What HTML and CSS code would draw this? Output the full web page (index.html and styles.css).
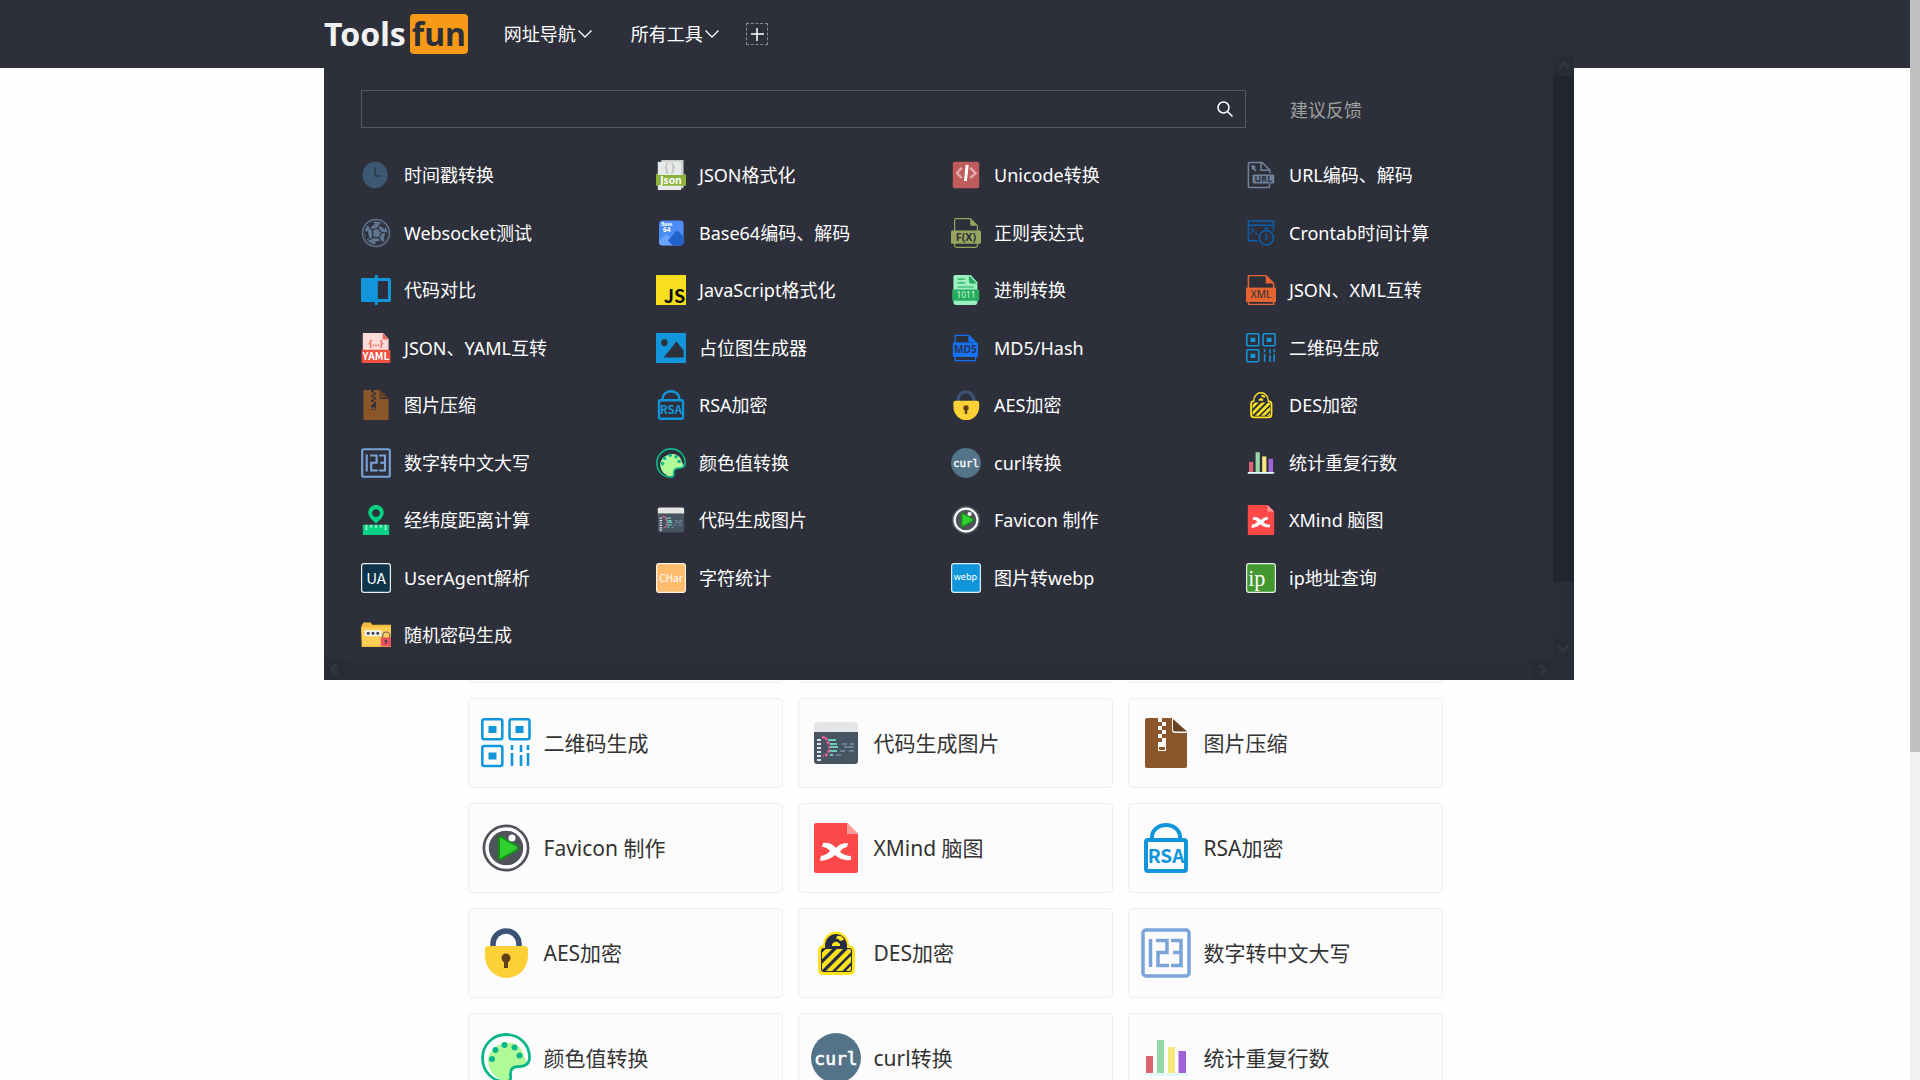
FILE: index.html
```html
<!DOCTYPE html>
<html lang="zh-CN">
<head>
<meta charset="utf-8">
<title>Tools fun</title>
<link rel="stylesheet" href="styles.css">
</head>
<body>
<svg class="clips" aria-hidden="true">
  <clipPath id="ball-clip"><circle cx="25" cy="25" r="19"/></clipPath>
  <clipPath id="des-clip"><rect x="11" y="21" width="29" height="22" rx="2"/></clipPath>
  <clipPath id="base-clip"><rect x="5" y="4" width="41" height="42" rx="6"/></clipPath>
</svg>
<svg class="sprite" aria-hidden="true">
  <symbol id="i-time" viewBox="0 0 50 50"><ellipse cx="23.5" cy="25" rx="21" ry="22" fill="#3c5873"/><path d="M23.5 12v14.5H35" fill="none" stroke="#2b3a4d" stroke-width="2.5"/></symbol>
  <symbol id="i-websocket" viewBox="0 0 50 50"><circle cx="25" cy="25" r="22.5" fill="none" stroke="#5f748d" stroke-width="2.5"/><circle cx="25" cy="25" r="19" fill="#5f748d"/><g clip-path="url(#ball-clip)" fill="none" stroke="#2d303a" stroke-width="2"><path d="M19 20l9-3 6 7-4 9-10-1zM19 20l-5-5M28 17l4-6M34 24l9 1M30 33l4 8M20 32l-7 5"/></g><g clip-path="url(#ball-clip)" fill="#2d303a"><path d="M11 12l8-6 4 4-8 6zM32 8l9 5-1 6-9-7zM44 24l-1 13-5-1 2-10zM24 39l11-1 1 6-12 2zM6 22l5 0 3 12-5 2z"/></g></symbol>
  <symbol id="i-diff" viewBox="0 0 50 50"><path d="M2 5h21V2a2 2 0 0 1 5 0v3h19a3 3 0 0 1 3 3v34a3 3 0 0 1-3 3H28v3a2 2 0 0 1-5 0v-3H2a2 2 0 0 1-2-2V7a2 2 0 0 1 2-2zm26 5v30h17V10z" fill="#1296db" fill-rule="evenodd"/></symbol>
  <symbol id="i-yaml" viewBox="0 0 50 50"><path d="M3 0h34l9 10v20H3z" fill="#fddbd9"/><path d="M36 0l10 11H36z" fill="#f2675a"/><rect x="1" y="28" width="48" height="22" rx="2" fill="#f0503f"/><text x="25" y="22" font-size="15" font-weight="700" fill="#ee5a4a">{...}</text><text x="25" y="45" font-size="17" class="narrow" font-weight="700" fill="#fff">YAML</text></symbol>
  <symbol id="i-zip" viewBox="0 0 50 50"><path d="M6 0h11v4h4v4h-4v4h4v4h-4v4h4v4h-4v9h8V20h-4v-4h4v-4h-4V8h4V4h-4V0h10v12q0 3 3 3h12v33a2 2 0 0 1-2 2H6a2 2 0 0 1-2-2V2a2 2 0 0 1 2-2z" fill="#8b572a"/><rect x="18" y="29" width="6" height="3" fill="#8b572a"/><path d="M32 1l14 12.500H34q-2 0-2-2z" fill="#6b4220"/></symbol>
  <symbol id="i-json" viewBox="0 0 50 50"><path d="M9 0h37v47H9z" fill="#c9ccce"/><path d="M3 3h39v47H3z" fill="#e8e9e9"/><path d="M0 24l3-3v4h44v-3l3 3v18H0z" fill="#8cb43d"/><text x="23" y="19" font-size="17" fill="#a9acae">{ }</text><text x="25" y="40" font-size="17" font-weight="700" fill="#fff">Json</text></symbol>
  <symbol id="i-base64" viewBox="0 0 50 50"><rect x="5" y="4" width="41" height="42" rx="6" fill="#4d8df6"/><g clip-path="url(#base-clip)"><path d="M5 37l8-7q5-3 9 1l14 15H5z" fill="#6ba4ff"/><path d="M20 38l11-14q4-4 7-1l8 8v15H28z" fill="#2262cc"/></g><text x="18" y="13" font-size="8" font-weight="700" fill="#fff">Base</text><text x="18" y="24" font-size="11" font-weight="700" fill="#fff">64</text></symbol>
  <symbol id="i-js" viewBox="0 0 50 50"><path d="M0 0h50v50H0z" fill="#f7df1e"/><text x="31" y="46" font-size="30" class="narrow" font-weight="700" fill="#080808">JS</text></symbol>
  <symbol id="i-image" viewBox="0 0 50 50"><path d="M0 0h50v50H0zM14 10a5.500 6 0 1 0 .1 0zM34 14L13 41h33V29z" fill="#1296db" fill-rule="evenodd"/></symbol>
  <symbol id="i-rsa" viewBox="0 0 50 50"><rect x="5" y="17" width="40" height="31" rx="2" fill="none" stroke="#1296db" stroke-width="4"/><path d="M11 16v-2a14 12 0 0 1 28 0v2" fill="none" stroke="#1296db" stroke-width="4"/><text x="25" y="40" font-size="19" class="narrow" font-weight="700" fill="#1296db">RSA</text></symbol>
  <symbol id="i-unicode" viewBox="0 0 50 50"><rect x="3" y="3" width="44" height="44" rx="3" fill="#bf5b5b"/><path d="M18 13L10 22l8 8M32 13l9 9-9 8" fill="none" stroke="#e3a8a8" stroke-width="4"/><path d="M27 8l-3 27" stroke="#fff" stroke-width="5"/></symbol>
  <symbol id="i-regex" viewBox="0 0 50 50"><path d="M6 22V4q0-3 3-3h23l12 12v9M6 40v6q0 3 3 3h32q3 0 3-3v-6" fill="none" stroke="#97a45e" stroke-width="2"/><path d="M32 1l12 12h-9q-3 0-3-3z" fill="#97a45e"/><rect y="21" width="50" height="22" rx="2" fill="#97a45e"/><text x="25" y="38" font-size="18" font-weight="700" fill="#2d303a">F(X)</text></symbol>
  <symbol id="i-binary" viewBox="0 0 50 50"><path d="M7 0h26l11 12v34q0 4-4 4H8q-4 0-4-4V3q0-3 3-3z" fill="#9cefc0"/><path d="M30 1l13 13H33q-3 0-3-3z" fill="#27ab5f"/><path d="M11 7h12M11 13h12M11 20h27" stroke="#27ab5f" stroke-width="2"/><rect x="2" y="24" width="45" height="19" rx="2" fill="#27ab5f"/><text x="25" y="39" font-size="14" fill="#c8f8dc">1011</text></symbol>
  <symbol id="i-md5" viewBox="0 0 50 50"><path d="M7 18V4h23l10 10v4M7 40v6h34v-6" fill="none" stroke="#1672f5" stroke-width="2"/><path d="M29 4v11h12z" fill="#1672f5"/><rect x="3" y="16" width="42" height="24" rx="2" fill="#1672f5"/><text x="24" y="34" font-size="17" font-weight="700" fill="#263554">MD5</text></symbol>
  <symbol id="i-aes" viewBox="0 0 50 50"><path d="M12 19v-3a13 13 0 0 1 26 0v3" fill="none" stroke="#3c5275" stroke-width="5.500"/><path d="M7 18h36q4 0 4 4v6a21.500 22 0 0 1-43 0v-6q0-4 3-4z" fill="#fdd135"/><circle cx="25" cy="30" r="4.500" fill="#5e4019"/><path d="M23 31h4v9h-4z" fill="#5e4019"/></symbol>
  <symbol id="i-url" viewBox="0 0 50 50"><path d="M40 22V17L27 4H6q-2 0-2 2v38q0 2 2 2h33v-6" fill="none" stroke="#71829a" stroke-width="2.500"/><path d="M25 4v13h15" fill="none" stroke="#71829a" stroke-width="2.500"/><path d="M9 8l8 3-3 2 4 5-2 1-4-4-2 2z" fill="#71829a"/><rect x="11" y="24" width="36" height="15" rx="2" fill="#71829a"/><text x="29" y="37" font-size="15" font-weight="700" fill="#2d303a">URL</text></symbol>
  <symbol id="i-cron" viewBox="0 0 50 50"><path d="M19 38H4V5h42v14M4 12h42" fill="none" stroke="#0a60b0" stroke-width="2.500"/><path d="M8 17l5 4-5 4M15 26h5M34 20v-3m-4 0h8M43 23l2-2" fill="none" stroke="#0a60b0" stroke-width="2"/><circle cx="34" cy="33" r="12" fill="none" stroke="#0a60b0" stroke-width="2.500"/><path d="M34 26v9M32 35h4" stroke="#0a60b0" stroke-width="2"/></symbol>
  <symbol id="i-xml" viewBox="0 0 50 50"><path d="M4 22V1h29l13 13v8M4 44v5h42v-5" fill="none" stroke="#e5642f" stroke-width="2.500"/><path d="M33 1v13h13z" fill="#e5642f"/><rect y="21" width="50" height="24" fill="#e5642f"/><text x="25" y="39" font-size="17" fill="#2d303a">XML</text></symbol>
  <symbol id="i-qr" viewBox="0 0 50 50"><g fill="none" stroke="#1296db" stroke-width="2.600"><rect x="1.300" y="1.300" width="20" height="20" rx="2"/><rect x="28.500" y="1.300" width="20" height="20" rx="2"/><rect x="1.300" y="28" width="20" height="20" rx="2"/><path d="M31 27v5M31 35v13M40 27v7M40 37v11M47 27v5M47 35v13"/></g><path d="M7.500 8h8v7h-8zM34.500 8h8v7h-8zM7.500 34.500h8v7h-8z" fill="#1296db"/></symbol>
  <symbol id="i-des" viewBox="0 0 50 50"><path d="M12 17a13 13.500 0 0 1 26 0q6 1 6 6v18q0 6-6 6H13q-6 0-6-6V23q0-5 5-6z" fill="#fce21b"/><path d="M14 21v-3a11 12 0 0 1 22 0v3z" fill="#252c44"/><path d="M21 18v-2q4-5 8 0v2zM26 8q5-1 7 4l-4 1q-2-3-4-2z" fill="#fce21b"/><rect x="10" y="20" width="31" height="24" rx="3" fill="#252c44"/><g clip-path="url(#des-clip)" stroke="#fce21b" stroke-width="4.500"><path d="M6 33l19-19M6 44l26-26M13 48l30-30M23 48l20-20M33 48l12-12"/></g></symbol>
  <symbol id="i-num" viewBox="0 0 50 50"><rect x="2" y="2" width="46" height="46" rx="3" fill="none" stroke="#7aa3d8" stroke-width="3.500"/><path d="M9.500 11v28M15 12.500h11v12h-9v13h11M30 12.500h10v25H30M32 24.500h8" fill="none" stroke="#7aa3d8" stroke-width="3.500"/></symbol>
  <symbol id="i-palette" viewBox="0 0 50 50"><path d="M7 28C7 10 36 2 42 20q3 8 5 10-5 5-13 4-6 4-4 11-6 5-13 0-9-5-10-17z" fill="#b1fa98"/><path d="M25 1.500C12 1.500 1.500 12 1.500 25S11 48.500 24 48.500c6 0 6-3 5.500-6-.5-6 2-9 8-9 7 .5 11-3 11-9C48.500 11 38 1.500 25 1.500z" fill="none" stroke="#0bb68b" stroke-width="2.800"/><g fill="#0bb68b"><circle cx="11" cy="26" r="3"/><circle cx="14.500" cy="17" r="3"/><circle cx="23.500" cy="12" r="3"/><circle cx="33.500" cy="14.500" r="3"/><circle cx="38.500" cy="22.500" r="3"/></g></symbol>
  <symbol id="i-curl" viewBox="0 0 50 50"><circle cx="25" cy="25" r="25" fill="#527388"/><text x="25" y="32" font-size="18" class="mono" fill="#fff" stroke="#fff" stroke-width=".6">curl</text></symbol>
  <symbol id="i-bars" viewBox="0 0 50 50"><path d="M3 40h44v3H3z" fill="#e3f8fb"/><path d="M5 23h7v17H5z" fill="#df6272"/><path d="M16 7h7v33h-7z" fill="#93d8a5"/><path d="M27 14h7v26h-7z" fill="#f8e97e"/><path d="M37.500 18H45v22h-7.500z" fill="#a062d6"/></symbol>
  <symbol id="i-map" viewBox="0 0 50 50"><path d="M25 0a13 13 0 0 1 13 13q0 7-13 18Q12 20 12 13A13 13 0 0 1 25 0zm0 7a6.500 6.500 0 1 0 .1 0z" fill="#06d285" fill-rule="evenodd"/><path d="M3 33h44v17H3z" fill="#06d285"/><path d="M9 33v9M17 33v5M25 33v5M33 33v5M41 33v9" stroke="#9df0cd" stroke-width="3"/></symbol>
  <symbol id="i-code" viewBox="0 0 50 50"><path d="M3 14h44v29q0 3-3 3H6q-3 0-3-3z" fill="#465561"/><path d="M6 4h38q3 0 3 3v7H3V7q0-3 3-3z" fill="#e5e5e5"/><path d="M8 21v22" stroke="#e0e3e5" stroke-width="4" stroke-dasharray="2 2"/><path d="M11 20l3-1.500 4 8 1 5-4 6-3 1" fill="none" stroke="#ee5f97" stroke-width="2.500" stroke-dasharray="3 1.500"/><path d="M17 22h8M19 26h7M19 29h8M19 33h7M19 37h3" stroke="#6bcfb5" stroke-width="2"/><path d="M31 26h5M39 26h4M33 29h10M29 33h5M38 33h5M25 37h5" stroke="#6b8191" stroke-width="2"/></symbol>
  <symbol id="i-favicon" viewBox="0 0 50 50"><circle cx="25" cy="25" r="23.500" fill="#50535b"/><circle cx="25" cy="25" r="19" fill="#50535b" stroke="#fff" stroke-width="3.500"/><path d="M18 15v20q0 2 2 1l16-9q2-2 0-4l-16-9q-2-1-2 1z" fill="#2fd02f" stroke="#129015" stroke-width="2"/><circle cx="31" cy="15" r="3.500" fill="#fff"/></symbol>
  <symbol id="i-xmind" viewBox="0 0 50 50"><path d="M5 0h31l11 11v37q0 2-2 2H5q-2 0-2-2V2q0-2 2-2z" fill="#fc4848"/><path d="M36 0l11 11H36z" fill="#ff9a9a"/><path d="M12 20q8-1 13 5 4-5 12-5l-1 4q-5 1-7 5 5 4 11 4v4q-10 1-16-5-5 5-15 6l1-5q6-1 9-5-3-4-8-4z" fill="#fff"/></symbol>
  <symbol id="i-ua" viewBox="0 0 50 50"><rect x="1" y="1" width="48" height="48" rx="4" fill="#0d3448" stroke="#eee" stroke-width="2"/><text x="25" y="35" font-size="25" class="narrow" fill="#fff">UA</text></symbol>
  <symbol id="i-char" viewBox="0 0 50 50"><rect x="1" y="1" width="48" height="48" rx="4" fill="#ffbc6c" stroke="#fff1e2" stroke-width="2"/><text x="25" y="32" font-size="17" class="narrow" fill="#fff">CHar</text></symbol>
  <symbol id="i-webp" viewBox="0 0 50 50"><rect x="1" y="1" width="48" height="48" rx="4" fill="#1296db" stroke="#d8eefa" stroke-width="2"/><text x="24" y="29" font-size="15" fill="#fff">webp</text></symbol>
  <symbol id="i-ip" viewBox="0 0 50 50"><rect x="1" y="1" width="48" height="48" rx="4" fill="#43972f" stroke="#e6f0e3" stroke-width="2"/><text x="18" y="38" font-size="37" class="serif" fill="#fff">ip</text></symbol>
  <symbol id="i-folder" viewBox="0 0 50 50"><path d="M4 4h12l3 4h31v37H1V9z" fill="#f5ba3e"/><path d="M0 12h50v31H2z" fill="#ffcf55"/><path d="M6 17h28v10H6z" fill="#f3f3f3"/><g fill="#3c4048"><circle cx="12" cy="22" r="2.500"/><circle cx="20" cy="22" r="2.500"/><circle cx="28" cy="22" r="2.500"/></g><path d="M36 31v-5a6 6 0 0 1 12 0v5" fill="none" stroke="#5d6672" stroke-width="2"/><rect x="33" y="29" width="17" height="15" fill="#ef5164"/><circle cx="41.500" cy="35" r="2.500" fill="#5d4450"/><path d="M41.500 36v4" stroke="#5d4450" stroke-width="2"/></symbol>
  <symbol id="i-down" viewBox="0 0 16 16"><path d="M1.500 4.500L8 11l6.500-6.500" fill="none" stroke="currentColor" stroke-width="1.300"/></symbol>
  <symbol id="i-arrow" viewBox="0 0 21 21"><path d="M6 13l5-5 5 5" fill="none" stroke="#353842" stroke-width="3"/></symbol>
</svg>

<div class="page">
  <header class="header">
    <div class="container">
      <a class="logo" href="#">Tools<span class="logo-badge">fun</span></a>
      <nav class="nav">
        <button class="nav-item" type="button">网址导航<svg class="chevron"><use href="#i-down"/></svg></button>
        <button class="nav-item" type="button" aria-expanded="true">所有工具<svg class="chevron"><use href="#i-down"/></svg></button>
      </nav>
      <button class="add" type="button" aria-label="添加"><svg viewBox="0 0 20 20"><path d="M10 4v13M4 10h13" stroke="currentColor" stroke-width="1.500"/></svg></button>

      <section class="panel">
        <div class="panel-body">
          <div class="tools-bar">
            <form class="search">
              <input class="search-input" type="text" aria-label="搜索工具">
              <button class="search-button" type="submit" aria-label="搜索"><svg viewBox="0 0 16 16"><circle cx="6.500" cy="6.500" r="5.500" fill="none" stroke="currentColor" stroke-width="1.500"/><path d="M10.500 10.500l5 5" stroke="currentColor" stroke-width="1.500"/></svg></button>
            </form>
            <a class="feedback" href="#">建议反馈</a>
          </div>
          <ul class="tools">
            <li><a class="tool" href="#"><svg><use href="#i-time"/></svg>时间戳转换</a></li>
            <li><a class="tool" href="#"><svg><use href="#i-json"/></svg>JSON格式化</a></li>
            <li><a class="tool" href="#"><svg><use href="#i-unicode"/></svg>Unicode转换</a></li>
            <li><a class="tool" href="#"><svg><use href="#i-url"/></svg>URL编码、解码</a></li>
            <li><a class="tool" href="#"><svg><use href="#i-websocket"/></svg>Websocket测试</a></li>
            <li><a class="tool" href="#"><svg><use href="#i-base64"/></svg>Base64编码、解码</a></li>
            <li><a class="tool" href="#"><svg><use href="#i-regex"/></svg>正则表达式</a></li>
            <li><a class="tool" href="#"><svg><use href="#i-cron"/></svg>Crontab时间计算</a></li>
            <li><a class="tool" href="#"><svg><use href="#i-diff"/></svg>代码对比</a></li>
            <li><a class="tool" href="#"><svg><use href="#i-js"/></svg>JavaScript格式化</a></li>
            <li><a class="tool" href="#"><svg><use href="#i-binary"/></svg>进制转换</a></li>
            <li><a class="tool" href="#"><svg><use href="#i-xml"/></svg>JSON、XML互转</a></li>
            <li><a class="tool" href="#"><svg><use href="#i-yaml"/></svg>JSON、YAML互转</a></li>
            <li><a class="tool" href="#"><svg><use href="#i-image"/></svg>占位图生成器</a></li>
            <li><a class="tool" href="#"><svg><use href="#i-md5"/></svg>MD5/Hash</a></li>
            <li><a class="tool" href="#"><svg><use href="#i-qr"/></svg>二维码生成</a></li>
            <li><a class="tool" href="#"><svg><use href="#i-zip"/></svg>图片压缩</a></li>
            <li><a class="tool" href="#"><svg><use href="#i-rsa"/></svg>RSA加密</a></li>
            <li><a class="tool" href="#"><svg><use href="#i-aes"/></svg>AES加密</a></li>
            <li><a class="tool" href="#"><svg><use href="#i-des"/></svg>DES加密</a></li>
            <li><a class="tool" href="#"><svg><use href="#i-num"/></svg>数字转中文大写</a></li>
            <li><a class="tool" href="#"><svg><use href="#i-palette"/></svg>颜色值转换</a></li>
            <li><a class="tool" href="#"><svg><use href="#i-curl"/></svg>curl转换</a></li>
            <li><a class="tool" href="#"><svg><use href="#i-bars"/></svg>统计重复行数</a></li>
            <li><a class="tool" href="#"><svg><use href="#i-map"/></svg>经纬度距离计算</a></li>
            <li><a class="tool" href="#"><svg><use href="#i-code"/></svg>代码生成图片</a></li>
            <li><a class="tool" href="#"><svg><use href="#i-favicon"/></svg>Favicon 制作</a></li>
            <li><a class="tool" href="#"><svg><use href="#i-xmind"/></svg>XMind 脑图</a></li>
            <li><a class="tool" href="#"><svg><use href="#i-ua"/></svg>UserAgent解析</a></li>
            <li><a class="tool" href="#"><svg><use href="#i-char"/></svg>字符统计</a></li>
            <li><a class="tool" href="#"><svg><use href="#i-webp"/></svg>图片转webp</a></li>
            <li><a class="tool" href="#"><svg><use href="#i-ip"/></svg>ip地址查询</a></li>
            <li><a class="tool" href="#"><svg><use href="#i-folder"/></svg>随机密码生成</a></li>
          </ul>
        </div>
        <div class="bar bar-v" aria-hidden="true">
          <svg class="bar-end"><use href="#i-arrow"/></svg>
          <div class="bar-track"><div class="bar-thumb"></div></div>
          <svg class="bar-end end-down"><use href="#i-arrow"/></svg>
        </div>
        <div class="bar bar-h" aria-hidden="true">
          <svg class="bar-end end-left"><use href="#i-arrow"/></svg>
          <svg class="bar-end end-right"><use href="#i-arrow"/></svg>
        </div>
        <div class="bar" aria-hidden="true"></div>
      </section>
    </div>
  </header>

  <main class="main">
    <ul class="cards">
      <li class="card"></li>
      <li class="card"></li>
      <li class="card"></li>
      <li><a class="card" href="#"><svg><use href="#i-qr"/></svg>二维码生成</a></li>
      <li><a class="card" href="#"><svg><use href="#i-code"/></svg>代码生成图片</a></li>
      <li><a class="card" href="#"><svg><use href="#i-zip"/></svg>图片压缩</a></li>
      <li><a class="card" href="#"><svg><use href="#i-favicon"/></svg>Favicon 制作</a></li>
      <li><a class="card" href="#"><svg><use href="#i-xmind"/></svg>XMind 脑图</a></li>
      <li><a class="card" href="#"><svg><use href="#i-rsa"/></svg>RSA加密</a></li>
      <li><a class="card" href="#"><svg><use href="#i-aes"/></svg>AES加密</a></li>
      <li><a class="card" href="#"><svg><use href="#i-des"/></svg>DES加密</a></li>
      <li><a class="card" href="#"><svg><use href="#i-num"/></svg>数字转中文大写</a></li>
      <li><a class="card" href="#"><svg><use href="#i-palette"/></svg>颜色值转换</a></li>
      <li><a class="card" href="#"><svg><use href="#i-curl"/></svg>curl转换</a></li>
      <li><a class="card" href="#"><svg><use href="#i-bars"/></svg>统计重复行数</a></li>
    </ul>
  </main>
</div>
<div class="page-scroll" aria-hidden="true"><div class="page-thumb"></div></div>
</body>
</html>
```
FILE: styles.css
```css
* { box-sizing: border-box; }

body {
  margin: 0;
  height: 100vh;
  display: flex;
  overflow: hidden;
  background: #fefefe;
  color: #333;
  font: 18px/30px "Noto Sans", "Noto Sans CJK SC", sans-serif;
}

ul { margin: 0; padding: 0; list-style: none; }
a { color: inherit; text-decoration: none; }
svg { display: block; flex: none; }

button {
  margin: 0;
  padding: 0;
  border: 0;
  background: none;
  color: inherit;
  font: inherit;
  cursor: pointer;
}

.clips { position: absolute; width: 0; height: 0; }
.sprite { display: none; }
symbol text { text-anchor: middle; font-family: "Noto Sans", sans-serif; }
symbol .narrow { font-family: "Noto Sans CJK SC", sans-serif; }
symbol .mono { font-family: "DejaVu Sans Mono", monospace; }
symbol .serif { font-family: "Liberation Serif", serif; }

.page { flex: 1; min-width: 0; }

/* top bar */
.header { background: #2d303a; color: #fff; }
.container {
  position: relative;
  display: flex;
  align-items: center;
  max-width: 1262px;
  height: 68px;
  margin: 0 auto;
}
.logo {
  display: flex;
  align-items: center;
  gap: 4px;
  color: #f2f2f2;
  font-size: 32px;
  font-weight: 700;
  line-height: 40px;
}
.logo-badge {
  padding: 0 2px;
  border-radius: 4px;
  background: #f99a16;
  color: #2d303a;
}
.nav { display: flex; gap: 38px; margin-left: 36px; }
.nav-item { display: flex; align-items: center; gap: 1px; }
.chevron { width: 16px; height: 16px; }
.add {
  display: flex;
  margin-left: 26px;
  border: 1px dashed #8a8c93;
}
.add svg { width: 20px; height: 20px; }

/* drop-down with every tool */
.panel {
  position: absolute;
  z-index: 1;
  top: 55px;
  left: 0;
  display: grid;
  grid-template-columns: 1fr 21px;
  grid-template-rows: auto 21px;
  width: 1250px;
  max-width: 100%;
  background: #2d303a;
}
.panel-body { padding: 35px 12px 9px 37px; }
.tools-bar {
  display: grid;
  grid-template-columns: 3fr 1fr;
  align-items: center;
  margin-bottom: 32px;
}
.search { display: flex; height: 38px; border: 1px solid #545866; }
.search-input {
  flex: 1;
  min-width: 0;
  padding: 0 12px;
  border: 0;
  outline: 0;
  background: none;
  color: #fff;
  font: inherit;
}
.search-button { padding: 0 12px; }
.search-button svg { width: 16px; height: 16px; }
.feedback { padding-top: 2px; margin-left: 44px; color: #a0a0a0; }

.tools {
  display: grid;
  grid-template-columns: repeat(4, 1fr);
  align-content: space-between;
  height: 490px;
}
.tool { display: flex; align-items: center; gap: 13px; }
.tool svg { width: 30px; height: 30px; }

.bar { display: flex; background: #2b2e38; }
.bar-v { flex-direction: column; }
.bar-h { justify-content: space-between; }
.bar-end { width: 21px; height: 21px; background: #292c35; }
.end-down { transform: rotate(180deg); }
.end-left { transform: rotate(-90deg); }
.end-right { transform: rotate(90deg); }
.bar-track { flex: 1; }
.bar-thumb { height: 90%; background: #22252d; }

/* card grid */
.main { padding: 525px 24px 0; }
.cards {
  display: grid;
  grid-template-columns: repeat(3, 1fr);
  gap: 15px;
  max-width: 975px;
  margin: 0 auto;
}
.card {
  display: flex;
  align-items: center;
  gap: 13px;
  height: 90px;
  padding: 0 12px;
  border: 1px solid #eee;
  border-radius: 4px;
  background: #fcfcfc;
  font-size: 21px;
  line-height: 28px;
}
.card svg { width: 50px; height: 50px; }

.page-scroll { width: 10px; background: #f1f1f1; }
.page-thumb { height: 69.6%; background: #c1c1c1; }
```
